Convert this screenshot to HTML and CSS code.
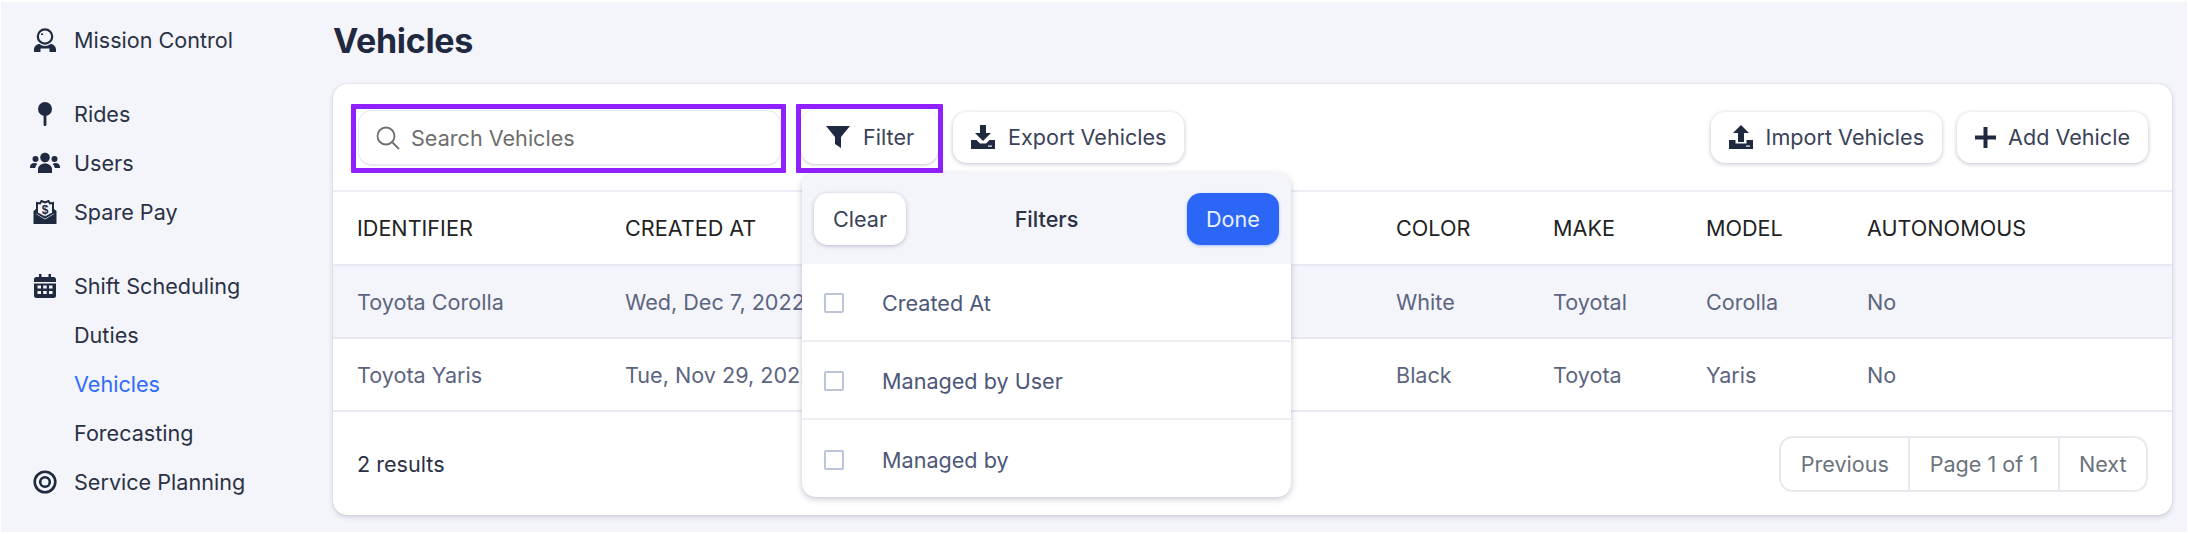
FILE: index.html
```html
<!DOCTYPE html>
<html lang="en">
<head>
<meta charset="utf-8">
<title>Vehicles</title>
<link rel="stylesheet" href="styles.css">
</head>
<body>
<div class="app">
  <nav class="sidebar">
    <a class="nav-item nav-solo">
      <svg class="nav-icon" viewBox="0 0 24 24"><circle cx="12" cy="8.500" r="7.200" fill="none" stroke="#1f2940" stroke-width="2.200"/><rect x="8" y="5.500" width="2.200" height="1.500" fill="#1f2940"/><path d="M1 24v-2.500C1 18.500 3.500 16 6.500 16c1.500 1.200 3.500 2 5.500 2s4-.8 5.500-2c3 0 5.500 2.500 5.500 5.500V24h-6.500v-3.500h-9V24z" fill="#1f2940"/></svg>
      <span>Mission Control</span>
    </a>
    <div class="nav-group">
      <a class="nav-item">
        <svg class="nav-icon" viewBox="0 0 24 24"><circle cx="12" cy="7" r="7" fill="#1f2940"/><rect x="10.600" y="13" width="2.800" height="11" rx="1.200" fill="#1f2940"/></svg>
        <span>Rides</span>
      </a>
      <a class="nav-item">
        <svg class="nav-icon nav-icon-wide" viewBox="0 0 30 24"><circle cx="15" cy="6.500" r="4.800" fill="#1f2940"/><circle cx="5.500" cy="8" r="3" fill="#1f2940"/><circle cx="24.500" cy="8" r="3" fill="#1f2940"/><path d="M8 22v-4c0-3 3-5.500 7-5.500s7 2.500 7 5.500v4z" fill="#1f2940"/><path d="M0 16c0-2.500 2-4 4.500-4 1.200 0 2.200.3 3 1-1.300 1-2 2.500-2.300 4H0zM30 16c0-2.500-2-4-4.500-4-1.200 0-2.200.3-3 1 1.300 1 2 2.500 2.300 4H30z" fill="#1f2940"/></svg>
        <span>Users</span>
      </a>
      <a class="nav-item">
        <svg class="nav-icon" viewBox="0 0 24 24"><path d="M.5 11l2.500-2v5l9 5.500L21 14V9l2.500 2v13H.5z" fill="#1f2940"/><path d="M4 13V3l3 .5L8.500 1 12 2.500 15.500 1 17 3.500l3-.5v10l-8 4.500z" fill="none" stroke="#1f2940" stroke-width="2"/><text x="12" y="13.500" class="dollar">$</text></svg>
        <span>Spare Pay</span>
      </a>
    </div>
    <div class="nav-group">
      <a class="nav-item">
        <svg class="nav-icon" viewBox="0 0 24 24"><path d="M6 0h2.500v3h7V0H18v3h2.500A2.500 2.500 0 0 1 23 5.500V8H1V5.500A2.500 2.500 0 0 1 3.500 3H6zM1 9.500h22v12a2.500 2.500 0 0 1-2.500 2.500h-17A2.500 2.500 0 0 1 1 21.500z" fill="#1f2940"/><g fill="#f4f5fa"><rect x="4.500" y="11.500" width="3.500" height="3"/><rect x="10.200" y="11.500" width="3.500" height="3"/><rect x="16" y="11.500" width="3.500" height="3"/><rect x="4.500" y="17" width="3.500" height="3"/><rect x="10.200" y="17" width="3.500" height="3"/><rect x="16" y="17" width="3.500" height="3"/></g></svg>
        <span>Shift Scheduling</span>
      </a>
      <a class="nav-item nav-sub"><span>Duties</span></a>
      <a class="nav-item nav-sub is-active"><span>Vehicles</span></a>
      <a class="nav-item nav-sub"><span>Forecasting</span></a>
      <a class="nav-item">
        <svg class="nav-icon" viewBox="0 0 24 24"><circle cx="12" cy="12" r="10.300" fill="none" stroke="#1f2940" stroke-width="2.600"/><circle cx="12" cy="12" r="4.800" fill="none" stroke="#1f2940" stroke-width="2.600"/></svg>
        <span>Service Planning</span>
      </a>
    </div>
  </nav>

  <main class="main">
    <h1 class="title">Vehicles</h1>
    <section class="card">
      <div class="toolbar">
        <div class="outlined outlined-search">
          <label class="search">
            <svg class="search-icon" viewBox="0 0 24 24"><circle cx="10" cy="10" r="8.500" fill="none" stroke="#6e6e6e" stroke-width="1.800"/><path d="M16.500 16.500L23 23" stroke="#6e6e6e" stroke-width="1.800" fill="none"/></svg>
            <span>Search Vehicles</span>
          </label>
        </div>
        <div class="outlined outlined-filter">
          <button class="btn btn-filter">
            <svg class="btn-icon" viewBox="0 0 24 24"><path d="M0 1h24L15 12v11l-6-4v-7z" fill="#1f2940"/></svg>
            <span>Filter</span>
          </button>
        </div>
        <button class="btn">
          <svg class="btn-icon" viewBox="0 0 24 24"><path d="M9 0h6v8h5l-8 8-8-8h5z" fill="#1f2940"/><path d="M0 15h5.500l3.500 3.500h6l3.500-3.500H24v9H0z" fill="#1f2940"/><rect x="17" y="20.500" width="4" height="1.200" fill="#f4f5fa"/></svg>
          <span>Export Vehicles</span>
        </button>
        <div class="toolbar-gap"></div>
        <button class="btn">
          <svg class="btn-icon" viewBox="0 0 24 24"><path d="M12 0l8 8h-5v9H9V8H4z" fill="#1f2940"/><path d="M0 15h6.500v3.500h11V15H24v9H0z" fill="#1f2940"/><rect x="17" y="20.500" width="4" height="1.200" fill="#f4f5fa"/></svg>
          <span>Import Vehicles</span>
        </button>
        <button class="btn btn-add">
          <svg class="btn-icon btn-icon-plus" viewBox="0 0 21 21"><path d="M8.500 0h4v8.500H21v4h-8.500V21h-4v-8.500H0v-4h8.500z" fill="#1f2940"/></svg>
          <span>Add Vehicle</span>
        </button>
      </div>

      <table class="table">
        <colgroup>
          <col class="c1"><col class="c2"><col class="c3"><col class="c4"><col class="c5"><col class="c6"><col class="c7">
        </colgroup>
        <thead>
          <tr><th>IDENTIFIER</th><th>CREATED AT</th><th></th><th>COLOR</th><th>MAKE</th><th>MODEL</th><th>AUTONOMOUS</th></tr>
        </thead>
        <tbody>
          <tr class="row-hover"><td>Toyota Corolla</td><td>Wed, Dec 7, 2022</td><td></td><td>White</td><td>Toyotal</td><td>Corolla</td><td>No</td></tr>
          <tr><td>Toyota Yaris</td><td>Tue, Nov 29, 2022</td><td></td><td>Black</td><td>Toyota</td><td>Yaris</td><td>No</td></tr>
        </tbody>
      </table>

      <div class="footer">
        <span class="count">2 results</span>
        <div class="pager">
          <span class="pager-cell">Previous</span>
          <span class="pager-cell">Page 1 of 1</span>
          <span class="pager-cell">Next</span>
        </div>
      </div>

      <div class="popover">
        <div class="popover-head">
          <button class="btn btn-small">Clear</button>
          <span class="popover-title">Filters</span>
          <button class="btn btn-small btn-primary">Done</button>
        </div>
        <label class="popover-row"><span class="check"></span><span>Created At</span></label>
        <label class="popover-row"><span class="check"></span><span>Managed by User</span></label>
        <label class="popover-row"><span class="check"></span><span>Managed by</span></label>
      </div>
    </section>
  </main>
</div>
</body>
</html>
```

FILE: styles.css
```css
* { box-sizing: border-box; }
html, body { margin: 0; height: 100%; background: #fff; }
body { padding: 2px 1px 2px 1px; font-family: Inter, "Liberation Sans", sans-serif; color: #1f2940; }

.app {
  display: flex;
  height: 530px;
  background: #f4f5fa;
  overflow: hidden;
}

.sidebar {
  width: 332px;
  flex: none;
  padding: 13px 0 0 29px;
  font-size: 21.6px;
}
.nav-item {
  display: flex;
  align-items: center;
  height: 49px;
  color: #2a3145;
}
.nav-solo { margin-bottom: 25px; }
.nav-group { margin-bottom: 25px; }
.nav-icon { width: 24px; height: 24px; flex: none; margin: 0 17px 0 3px; }
.nav-icon-wide { width: 30px; margin: 0 14px 0 0; }
.nav-sub { padding-left: 44px; }
.is-active { color: #2f6bff; }
.dollar { font: 700 12px "Liberation Sans", sans-serif; text-anchor: middle; fill: #1f2940; }

.main { flex: 1; min-width: 0; padding-right: 15px; }
.title {
  margin: 0;
  height: 82px;
  padding-top: 18px;
  font-size: 34px;
  line-height: 42px;
  font-weight: 700;
  letter-spacing: -0.3px;
  color: #1f2940;
}

.card {
  position: relative;
  background: #fff;
  border-radius: 14px;
  height: 431px;
  box-shadow: 0 0 1px rgba(60, 60, 130, .35), 0 2px 5px rgba(60, 60, 110, .2);
}

.toolbar {
  display: flex;
  align-items: center;
  gap: 10px;
  height: 108px;
  padding: 0 24px 0 18px;
  border-bottom: 2px solid #ecedf5;
}
.toolbar-gap { flex: 1; }

.outlined {
  flex: none;
  border: 5px solid #9120ff;
  border-radius: 1px;
  margin-top: 3px;
  height: 69px;
}
.outlined-search { width: 435px; padding: 1px 0 0 2px; }
.outlined-filter { width: 147px; padding-top: 1px; }

.search {
  display: flex;
  align-items: center;
  height: 56px;
  padding-left: 17px;
  border: 1px solid #e9e9f3;
  border-bottom-width: 2px;
  border-radius: 14px;
  font-size: 21.6px;
  color: #6e6e6e;
}
.search-icon { width: 24px; height: 24px; margin-right: 11px; }

.btn {
  display: inline-flex;
  align-items: center;
  height: 51px;
  padding: 0 18px;
  background: #fff;
  border: 0;
  border-radius: 14px;
  font: 400 21.6px Inter, "Liberation Sans", sans-serif;
  color: #3a4257;
  box-shadow: 0 1px 4px rgba(60, 60, 110, .32);
}
.btn-icon { width: 24px; height: 24px; margin-right: 13px; flex: none; }
.btn-icon-plus { width: 21px; height: 21px; margin-right: 12px; }
.btn-add { margin-left: 5px; }
.btn-filter { width: 137px; height: 54px; padding-left: 25px; box-shadow: 0 1px 3px rgba(60, 60, 60, .3); }

.table { width: 100%; border-collapse: collapse; table-layout: fixed; font-size: 21.6px; }
.c1 { width: 268px; } .c2 { width: 400px; } .c3 { width: 371px; } .c4 { width: 157px; }
.c5 { width: 153px; } .c6 { width: 161px; }
.table th {
  height: 73px;
  padding: 0 0 0 24px;
  text-align: left;
  font-weight: 400;
  color: #222;
  border-bottom: 2px solid #e9e9f3;
}
.table td {
  height: 73px;
  padding: 0 0 0 24px;
  color: #5c6580;
  border-bottom: 2px solid #e9e9f3;
}
.row-hover { background: #f4f5fa; }

.footer {
  display: flex;
  align-items: center;
  justify-content: space-between;
  height: 104px;
  padding: 0 24px 0 24px;
}
.count { font-size: 21.6px; color: #2a3145; }
.pager {
  display: flex;
  height: 56px;
  border: 2px solid #e8e8ee;
  border-radius: 14px;
  font-size: 21.6px;
  color: #6b737b;
}
.pager-cell { display: flex; align-items: center; padding: 0 19.4px; border-left: 2px solid #e8e8ee; }
.pager-cell:first-child { border-left: 0; }

.popover {
  position: absolute;
  left: 469px;
  top: 89px;
  width: 489px;
  height: 324px;
  background: #fff;
  border-radius: 14px;
  overflow: hidden;
  box-shadow: 0 2px 6px rgba(60, 60, 110, .3);
}
.popover-head {
  display: flex;
  align-items: center;
  justify-content: space-between;
  height: 91px;
  padding: 0 12px;
  background: #f4f5fa;
}
.popover-title { font-size: 21.6px; font-weight: 500; color: #2a3145; }
.btn-small { padding: 0; height: 52px; width: 92px; justify-content: center; }
.btn-primary { background: #2b66f6; color: #e8efff; box-shadow: 0 1px 3px rgba(43, 102, 246, .4); }
.popover-row {
  display: flex;
  align-items: center;
  height: 78px;
  padding: 2px 0 0 22px;
  font-size: 21.6px;
  color: #4d5878;
  border-bottom: 2px solid #ecedf5;
}
.popover-row:last-child { border-bottom: 0; }
.check {
  width: 20px;
  height: 20px;
  margin-right: 38px;
  border: 2px solid #bcc4d8;
  border-radius: 2px;
}
```
